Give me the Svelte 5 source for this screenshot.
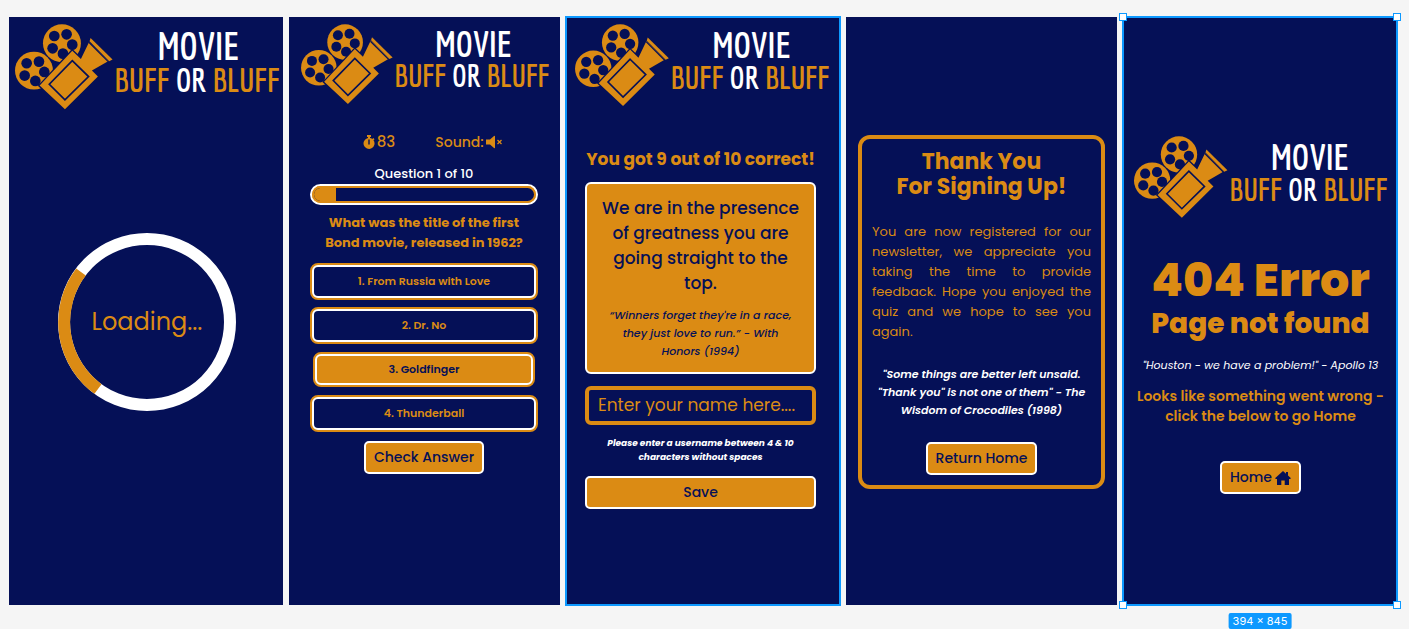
<script>
  const answers = ['From Russia with Love', 'Dr. No', 'Goldfinger', 'Thunderball'];
  let selected = $state(2);
  let username = $state('');
  const progress = 10;
</script>

{#snippet logo()}
  <svg class="logo" viewBox="45 46 793 258" role="img" aria-label="Movie Buff or Bluff">
    <g fill="#db8b14">
      <circle cx="102" cy="186" r="57" />
      <circle cx="186" cy="104" r="57" />
    </g>
    <g fill="#051057">
      <circle cx="80" cy="164" r="16" /><circle cx="117" cy="159" r="16" />
      <circle cx="74" cy="201" r="16" /><circle cx="133" cy="190" r="16" />
      <circle cx="106" cy="217" r="16" />
      <circle cx="163" cy="82" r="16" /><circle cx="200" cy="77" r="16" />
      <circle cx="158" cy="119" r="16" /><circle cx="217" cy="108" r="16" />
      <circle cx="189" cy="135" r="16" />
    </g>
    <path d="M217 126 243 151 268 99 326 157 276 186 294 204 195 302 119 231Z" fill="#db8b14" stroke="#051057" stroke-width="8" paint-order="stroke" />
    <path d="M272 88 338 153 328 158 269 98Z" fill="#db8b14" />
    <path d="M267 101 325 159" stroke="#051057" stroke-width="4" />
    <path d="M217 156 266 204 195 274 148 227Z" fill="none" stroke="#051057" stroke-width="5" />
    <text class="wordmark" x="596" y="153" text-anchor="middle" font-size="115" fill="#fff">MOVIE</text>
    <text class="wordmark" x="592" y="249" text-anchor="middle" font-size="97" fill="#db8b14">BUFF <tspan fill="#fff">OR</tspan> BLUFF</text>
  </svg>
{/snippet}

<main class="board">
  <section class="screen loading">
    {@render logo()}
    <div class="spinner" role="status">
      <svg viewBox="0 0 178 178" aria-hidden="true">
        <circle cx="89" cy="89" r="83" fill="none" stroke="#fff" stroke-width="12" />
        <path d="M23 39A83 83 0 0 0 40 156" fill="none" stroke="#db8b14" stroke-width="12" />
      </svg>
      <span>Loading...</span>
    </div>
  </section>

  <section class="screen quiz">
    {@render logo()}
    <div class="status">
      <span class="timer">
        <svg width="12" height="14" viewBox="0 0 12 14" aria-hidden="true">
          <path d="M4 0h4v2H7v1a5.300 5.300 0 0 1 2.300 1l1-1 1.200 1.200-1 1A5.500 5.500 0 1 1 5 3V2H4Z" fill="currentColor" />
          <path d="M6 5v4" stroke="#051057" stroke-width="1.400" stroke-linecap="round" />
        </svg>83
      </span>
      <button class="sound" type="button">Sound:
        <svg width="17" height="14" viewBox="0 0 17 14" aria-hidden="true">
          <path d="M0 4.500h4L8 1q1-.6 1 .5v11q0 1-1 .4L4 9.500H0Z" fill="currentColor" />
          <path d="m11.500 5 4 4m0-4-4 4" stroke="currentColor" stroke-width="1.300" />
        </svg>
      </button>
    </div>
    <p class="count">Question 1 of 10</p>
    <div class="bar" role="progressbar" aria-label="Quiz progress" aria-valuenow={progress} aria-valuemin="0" aria-valuemax="100">
      <div class="track"><div class="fill" style="width: {progress}%"></div></div>
    </div>
    <h2>What was the title of the first<br />Bond movie, released in 1962?</h2>
    <div class="answers">
      {#each answers as answer, i}
        <button type="button" class="answer" class:selected={selected === i} aria-pressed={selected === i} onclick={() => (selected = i)}>
          <span>{i + 1}. {answer}</span>
        </button>
      {/each}
    </div>
    <button class="action" type="button">Check Answer</button>
  </section>

  <section class="screen result outlined">
    {@render logo()}
    <h2>You got 9 out of 10 correct!</h2>
    <div class="verdict">
      <p>We are in the presence<br />of greatness you are<br />going straight to the<br />top.</p>
      <blockquote>“Winners forget they're in a race,<br />they just love to run.” - With<br />Honors (1994)</blockquote>
    </div>
    <input type="text" aria-label="Username" placeholder="Enter your name here...." bind:value={username} />
    <p class="hint">Please enter a username between 4 &amp; 10<br />characters without spaces</p>
    <button class="action" type="button">Save</button>
  </section>

  <section class="screen thanks">
    <div class="notice">
      <h2>Thank You<br />For Signing Up!</h2>
      <p>You are now registered for our newsletter, we appreciate you taking the time to provide feedback. Hope you enjoyed the quiz and we hope to see you again.</p>
      <blockquote>"Some things are better left unsaid.<br />"Thank you" is not one of them" - The<br />Wisdom of Crocodiles (1998)</blockquote>
      <button class="action" type="button">Return Home</button>
    </div>
  </section>

  <section class="screen missing outlined">
    {@render logo()}
    <h1>404 Error</h1>
    <h2>Page not found</h2>
    <blockquote>"Houston - we have a problem!" - Apollo 13</blockquote>
    <p>Looks like something went wrong -<br />click the below to go Home</p>
    <button class="action" type="button">Home
      <svg width="16" height="14" viewBox="0 0 16 14" aria-hidden="true">
        <path d="M8 0 11 2.700V1h2v3.500L16 7.200 15 8h-1v6H9.700V9.500H6.300V14H2V8H1L0 7.200Z" fill="currentColor" />
      </svg>
    </button>
    <i class="handle tl"></i><i class="handle tr"></i><i class="handle bl"></i><i class="handle br"></i>
    <span class="size">394 × 845</span>
  </section>
</main>

<style>
  :global(body) {
    background: #f5f5f5;
  }

  .board {
    --navy: #051057;
    --orange: #db8b14;
    --blue: #0d99ff;
    display: grid;
    grid-template-columns: 274fr 271fr 274fr 271fr 274fr;
    gap: 6px;
    padding: 17px 12px 24px 9px;
    font-family: Poppins, Inter, sans-serif;
    color: var(--orange);
  }

  .board * {
    box-sizing: border-box;
  }

  h1, h2, p, blockquote {
    margin: 0;
  }

  button, input {
    font: inherit;
    color: inherit;
  }

  button {
    cursor: pointer;
  }

  .screen {
    position: relative;
    min-width: 0;
    min-height: 588px;
    display: flex;
    flex-direction: column;
    align-items: center;
    padding: 7px 20px;
    background: var(--navy);
    text-align: center;
  }

  .outlined {
    outline: 2px solid var(--blue);
    outline-offset: -1px;
  }

  .logo {
    display: block;
    flex: none;
    width: 100%;
    overflow: visible;
  }

  .wordmark {
    font-family: Economica, "Pathway Gothic One", "PT Sans Narrow", sans-serif;
    font-weight: 700;
  }

  blockquote {
    font-size: 11px;
    font-style: italic;
    line-height: 18px;
    white-space: nowrap;
  }

  .action {
    flex: none;
    display: flex;
    align-items: center;
    justify-content: center;
    gap: 3px;
    height: 33px;
    padding: 0 8px;
    border: 2px solid #fff;
    border-radius: 5px;
    background: var(--orange);
    color: var(--navy);
    font-size: 14px;
    font-weight: 500;
    white-space: nowrap;
  }

  /* Loading */
  .loading {
    padding: 7px 4px 7px 6px;
  }

  .spinner {
    display: grid;
    place-items: center;
    width: 178px;
    margin-top: 123px;
    font-size: 24px;
  }

  .spinner > * {
    grid-area: 1 / 1;
  }

  /* Quiz */
  .quiz {
    padding: 7px 22px 7px 21px;
  }

  .quiz .logo {
    width: auto;
    align-self: stretch;
    margin: 0 -11px 0 -9px;
  }

  .status {
    display: grid;
    grid-template-columns: 90px 90px;
    justify-items: center;
    margin-top: 27px;
    font-size: 14px;
    line-height: 20px;
  }

  .timer, .sound {
    display: flex;
    align-items: center;
    gap: 2px;
    font-weight: 500;
  }

  .timer {
    font-size: 15px;
  }

  .sound {
    padding: 0;
    border: 0;
    background: none;
  }

  .count {
    margin-top: 13px;
    color: #fff;
    font-size: 13px;
    font-weight: 500;
    line-height: 18px;
  }

  .bar {
    width: 100%;
    margin-top: 1px;
    border: 2px solid #fff;
    border-radius: 11px;
    background: var(--orange);
  }

  .track {
    height: 17px;
    border: 2px solid var(--orange);
    border-radius: 9px;
    background: var(--navy);
    overflow: hidden;
  }

  .fill {
    height: 100%;
    background: var(--orange);
  }

  .quiz h2 {
    margin-top: 8px;
    font-size: 13px;
    font-weight: 700;
    line-height: 20px;
    white-space: nowrap;
  }

  .answers {
    display: grid;
    gap: 7px;
    width: 100%;
    margin-top: 10px;
  }

  .answer {
    height: 37px;
    padding: 0;
    border: 2px solid var(--orange);
    border-radius: 8px;
    background: var(--orange);
    font-size: 11px;
    font-weight: 600;
  }

  .answer span {
    display: grid;
    place-items: center;
    height: 100%;
    border: 2px solid #fff;
    border-radius: 6px;
    background: var(--navy);
  }

  .answer.selected {
    height: 35px;
    margin: 1px 3px;
    color: var(--navy);
  }

  .answer.selected span {
    background: var(--orange);
  }

  .quiz .action {
    margin-top: 9px;
  }

  /* Result */
  .result {
    padding: 7px 24px 7px 19px;
  }

  .result .logo {
    width: auto;
    align-self: stretch;
    margin: 0 -13px 0 -10px;
  }

  .result h2 {
    margin-top: 40px;
    font-size: 17px;
    font-weight: 700;
    line-height: 24px;
    white-space: nowrap;
  }

  .verdict {
    width: 100%;
    margin-top: 11px;
    padding: 12px 4px;
    border: 2px solid #fff;
    border-radius: 6px;
    background: var(--orange);
    color: var(--navy);
  }

  .verdict p {
    font-size: 17px;
    font-weight: 500;
    line-height: 25px;
    white-space: nowrap;
  }

  .verdict blockquote {
    margin-top: 10px;
    font-weight: 500;
  }

  input {
    width: 100%;
    height: 39px;
    margin-top: 12px;
    padding: 0 9px;
    border: 4px solid var(--orange);
    border-radius: 6px;
    background: var(--navy);
    font-size: 17px;
  }

  input::placeholder {
    color: var(--orange);
    opacity: 1;
  }

  .hint {
    margin-top: 11px;
    color: #fff;
    font-size: 9px;
    font-style: italic;
    font-weight: 700;
    line-height: 14px;
    white-space: nowrap;
  }

  .result .action {
    width: 100%;
    margin-top: 12px;
  }

  /* Newsletter thanks */
  .thanks {
    justify-content: center;
    padding: 9px 12px 7px;
  }

  .notice {
    display: flex;
    flex-direction: column;
    align-items: center;
    width: 100%;
    padding: 10px;
    border: 4px solid var(--orange);
    border-radius: 12px;
  }

  .notice h2 {
    font-size: 22px;
    font-weight: 700;
    line-height: 25px;
    white-space: nowrap;
  }

  .notice p {
    margin-top: 23px;
    font-size: 13px;
    line-height: 20px;
    text-align: justify;
  }

  .notice blockquote {
    margin-top: 23px;
    color: #fff;
    font-weight: 600;
  }

  .notice .action {
    margin-top: 23px;
  }

  /* Missing page */
  .missing {
    justify-content: center;
    padding: 8px 10px 0 11px;
  }

  .missing h1 {
    margin-top: 34px;
    font-size: 46px;
    font-weight: 800;
    line-height: 56px;
    white-space: nowrap;
  }

  .missing h2 {
    font-size: 28px;
    font-weight: 800;
    line-height: 32px;
    white-space: nowrap;
  }

  .missing blockquote {
    margin-top: 16px;
    color: #fff;
  }

  .missing p {
    margin-top: 12px;
    font-size: 14px;
    font-weight: 600;
    line-height: 20px;
    white-space: nowrap;
  }

  .missing .action {
    margin-top: 35px;
  }

  .handle {
    position: absolute;
    width: 8px;
    height: 8px;
    border: 1px solid var(--blue);
    background: #fff;
  }

  .tl { top: -4px; left: -4px; }
  .tr { top: -4px; right: -4px; }
  .bl { bottom: -4px; left: -4px; }
  .br { bottom: -4px; right: -4px; }

  .size {
    position: absolute;
    top: calc(100% + 8px);
    left: 50%;
    translate: -50% 0;
    padding: 0 4px;
    border-radius: 2px;
    background: var(--blue);
    color: #fff;
    font-family: Inter, sans-serif;
    font-size: 11px;
    line-height: 16px;
    white-space: nowrap;
  }
</style>
